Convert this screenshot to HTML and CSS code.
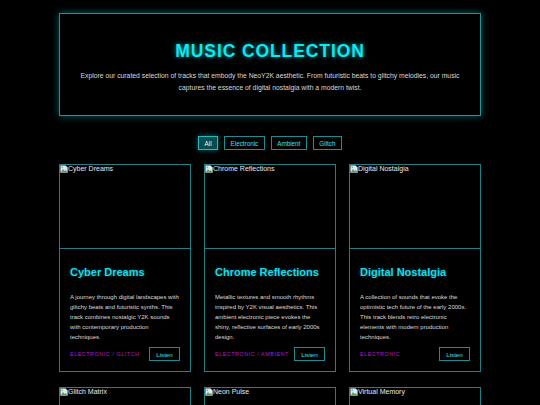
FILE: index.html
```html
<!DOCTYPE html>
<html lang="en">
<head>
<meta charset="utf-8">
<title>Music Collection</title>
<link rel="stylesheet" href="styles.css">
</head>
<body>
<main class="page">
  <header class="hero">
    <h1 class="hero-title">MUSIC COLLECTION</h1>
    <p class="hero-text">Explore our curated selection of tracks that embody the NeoY2K aesthetic. From futuristic beats to glitchy melodies, our music captures the essence of digital nostalgia with a modern twist.</p>
  </header>

  <nav class="filters">
    <button class="filter active">All</button>
    <button class="filter">Electronic</button>
    <button class="filter">Ambient</button>
    <button class="filter">Glitch</button>
  </nav>

  <section class="grid">
    <article class="card">
      <div class="thumb"><svg class="broken" viewBox="0 0 8 8"><path d="M0.5 0.5h5l2 2v5h-7z" fill="#dfe9ee" stroke="#9aa" stroke-width="0.5"/><path d="M1 7l2-3 1.5 2 1-1 2 2z" fill="#5aa05a"/><circle cx="2.3" cy="2.4" r="0.8" fill="#6aaedc"/></svg><span class="alt">Cyber Dreams</span></div>
      <div class="body">
        <h3 class="title">Cyber Dreams</h3>
        <p class="desc">A journey through digital landscapes with glitchy beats and futuristic synths. This track combines nostalgic Y2K sounds with contemporary production techniques.</p>
        <div class="foot"><span class="tag">ELECTRONIC / GLITCH</span><button class="listen">Listen</button></div>
      </div>
    </article>
    <article class="card">
      <div class="thumb"><svg class="broken" viewBox="0 0 8 8"><path d="M0.5 0.5h5l2 2v5h-7z" fill="#dfe9ee" stroke="#9aa" stroke-width="0.5"/><path d="M1 7l2-3 1.5 2 1-1 2 2z" fill="#5aa05a"/><circle cx="2.3" cy="2.4" r="0.8" fill="#6aaedc"/></svg><span class="alt">Chrome Reflections</span></div>
      <div class="body">
        <h3 class="title">Chrome Reflections</h3>
        <p class="desc">Metallic textures and smooth rhythms inspired by Y2K visual aesthetics. This ambient electronic piece evokes the shiny, reflective surfaces of early 2000s design.</p>
        <div class="foot"><span class="tag">ELECTRONIC / AMBIENT</span><button class="listen">Listen</button></div>
      </div>
    </article>
    <article class="card">
      <div class="thumb"><svg class="broken" viewBox="0 0 8 8"><path d="M0.5 0.5h5l2 2v5h-7z" fill="#dfe9ee" stroke="#9aa" stroke-width="0.5"/><path d="M1 7l2-3 1.5 2 1-1 2 2z" fill="#5aa05a"/><circle cx="2.3" cy="2.4" r="0.8" fill="#6aaedc"/></svg><span class="alt">Digital Nostalgia</span></div>
      <div class="body">
        <h3 class="title">Digital Nostalgia</h3>
        <p class="desc">A collection of sounds that evoke the optimistic tech future of the early 2000s. This track blends retro electronic elements with modern production techniques.</p>
        <div class="foot"><span class="tag">ELECTRONIC</span><button class="listen">Listen</button></div>
      </div>
    </article>
    <article class="card">
      <div class="thumb"><svg class="broken" viewBox="0 0 8 8"><path d="M0.5 0.5h5l2 2v5h-7z" fill="#dfe9ee" stroke="#9aa" stroke-width="0.5"/><path d="M1 7l2-3 1.5 2 1-1 2 2z" fill="#5aa05a"/><circle cx="2.3" cy="2.4" r="0.8" fill="#6aaedc"/></svg><span class="alt">Glitch Matrix</span></div>
      <div class="body">
        <h3 class="title">Glitch Matrix</h3>
        <p class="desc">Broken beats and fragmented melodies.</p>
      </div>
    </article>
    <article class="card">
      <div class="thumb"><svg class="broken" viewBox="0 0 8 8"><path d="M0.5 0.5h5l2 2v5h-7z" fill="#dfe9ee" stroke="#9aa" stroke-width="0.5"/><path d="M1 7l2-3 1.5 2 1-1 2 2z" fill="#5aa05a"/><circle cx="2.3" cy="2.4" r="0.8" fill="#6aaedc"/></svg><span class="alt">Neon Pulse</span></div>
      <div class="body">
        <h3 class="title">Neon Pulse</h3>
        <p class="desc">Bright synths and pulsing rhythms.</p>
      </div>
    </article>
    <article class="card">
      <div class="thumb"><svg class="broken" viewBox="0 0 8 8"><path d="M0.5 0.5h5l2 2v5h-7z" fill="#dfe9ee" stroke="#9aa" stroke-width="0.5"/><path d="M1 7l2-3 1.5 2 1-1 2 2z" fill="#5aa05a"/><circle cx="2.3" cy="2.4" r="0.8" fill="#6aaedc"/></svg><span class="alt">Virtual Memory</span></div>
      <div class="body">
        <h3 class="title">Virtual Memory</h3>
        <p class="desc">Echoes of a digital past.</p>
      </div>
    </article>
  </section>
</main>
</body>
</html>
```

FILE: styles.css
```css
* { box-sizing: border-box; }

html, body {
  margin: 0;
  background: #000;
}

body {
  font-family: "Liberation Sans", Arial, sans-serif;
  color: #ddd;
}

.page {
  width: 422px;
  margin: 0 auto;
  padding-top: 13px;
}

.hero {
  border: 1px solid #2a8f93;
  box-shadow: 0 0 7px rgba(0, 220, 230, 0.45);
  padding: 27px 12px 21px;
  text-align: center;
  height: 103px;
}

.hero-title {
  margin: 0;
  font-size: 17.5px;
  line-height: 20px;
  font-weight: bold;
  letter-spacing: 0.9px;
  color: #10e8f0;
  text-shadow: 0 0 5px rgba(0, 230, 240, 0.7);
}

.hero-text {
  margin: 9px 0 0;
  font-size: 6.8px;
  line-height: 12px;
  color: #d8d8d8;
}

.filters {
  display: flex;
  justify-content: center;
  gap: 6px;
  margin-top: 20px;
}

.filter {
  font-family: "Liberation Sans", Arial, sans-serif;
  font-size: 6.3px;
  height: 14px;
  padding: 0 5.5px;
  background: #000;
  color: #3fe0e8;
  border: 1px solid #1f8c90;
  border-radius: 0;
}

.filter.active {
  background: #0c4a4c;
  color: #dfffff;
  border-color: #29b8bd;
  box-shadow: 0 0 5px rgba(0, 230, 240, 0.5);
}

.grid {
  display: grid;
  grid-template-columns: repeat(3, minmax(0, 1fr));
  column-gap: 13px;
  row-gap: 15px;
  margin-top: 14px;
}

.card {
  border: 1px solid #237f83;
  background: #000;
  min-width: 0;
}

.thumb {
  height: 84px;
  border-bottom: 1px solid #237f83;
  display: flex;
  align-items: flex-start;
  font-size: 7px;
  color: #e8e8e8;
}

.broken {
  width: 8px;
  height: 8px;
  flex: none;
}

.alt {
  line-height: 8px;
}

.body {
  padding: 17px 10px 10px;
}

.title {
  margin: 0 0 13px;
  font-size: 11px;
  line-height: 13px;
  font-weight: bold;
  color: #1fd8e4;
  text-shadow: 0 0 3px rgba(0, 220, 230, 0.4);
}

.desc {
  margin: 0;
  font-size: 6px;
  line-height: 10px;
  color: #dcdcdc;
}

.foot {
  display: flex;
  align-items: center;
  justify-content: space-between;
  gap: 2px;
  margin-top: 5px;
}

.tag {
  font-size: 5.4px;
  letter-spacing: 0.55px;
  white-space: nowrap;
  color: #b21cc0;
}

.listen {
  font-family: "Liberation Sans", Arial, sans-serif;
  font-size: 6.2px;
  height: 14px;
  width: 31px;
  flex: none;
  padding: 0;
  background: #000;
  color: #3fe0e8;
  border: 1px solid #1f8c90;
  border-radius: 0;
}
```
